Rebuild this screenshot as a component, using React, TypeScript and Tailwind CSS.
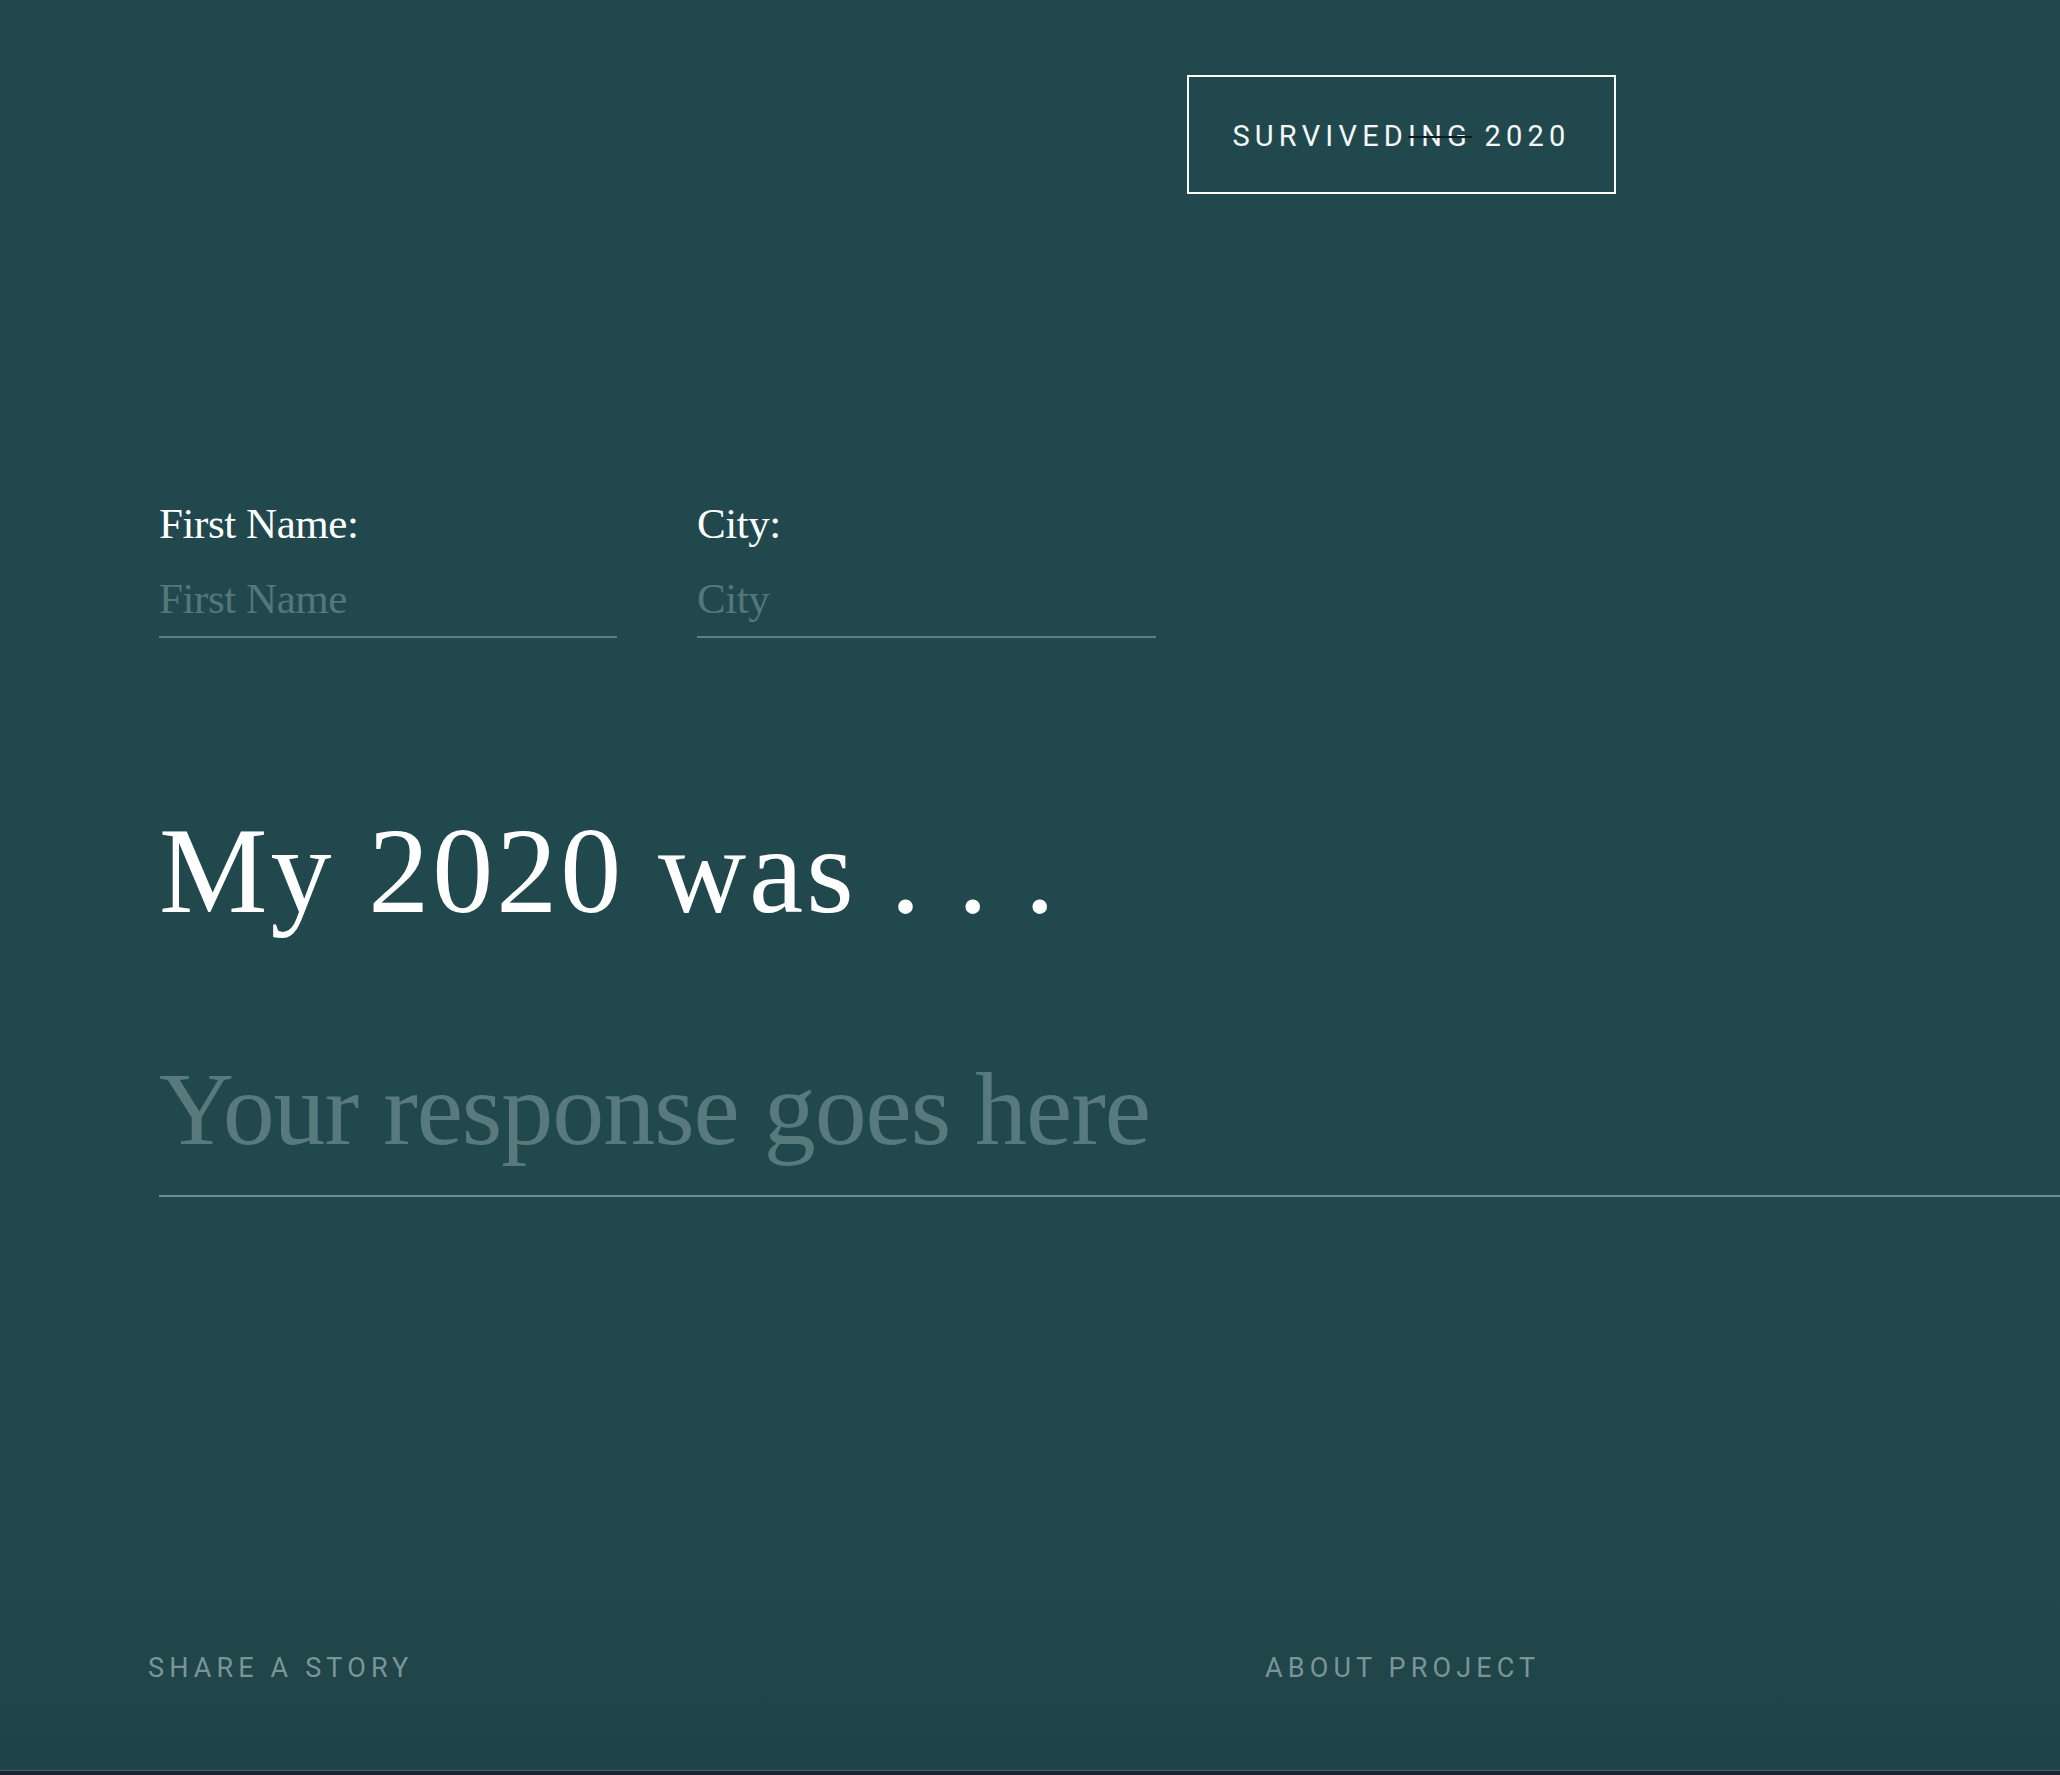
export default function App() {
  const serif = { fontFamily: '"Liberation Serif", "Times New Roman", serif' };
  const sans = { fontFamily: 'Roboto, "Liberation Sans", Arial, sans-serif' };

  return (
    <div className="w-full min-h-[1775px] flex flex-col bg-[#21494d] text-white">
      <div className="flex-1 flex flex-col bg-gradient-to-b from-[#21494d] from-85% to-[#1f4448]">
        {/* header badge */}
        <header className="pt-[75px] pl-[1187px]">
          <div
            className="w-[429px] h-[119px] pt-[4px] border-2 border-white flex items-center justify-center text-[29px] leading-none tracking-[0.18em] text-[#f4f7f7]"
            style={sans}
          >
            <span>
              SURVIVED
              <span className="line-through decoration-[#0c1d20] decoration-2">ING</span> 2020
            </span>
          </div>
        </header>

        {/* name + city */}
        <section className="pl-[159px] mt-[308px] flex gap-[80px]" style={serif}>
          {[
            { label: "First Name:", placeholder: "First Name", w: "w-[458px]" },
            { label: "City:", placeholder: "City", w: "w-[459px]" },
          ].map((f) => (
            <label key={f.label} className={`${f.w} flex flex-col`}>
              <span className="text-[43px] leading-none tracking-[-0.01em] text-white">{f.label}</span>
              <input
                type="text"
                placeholder={f.placeholder}
                className="mt-[29px] pb-[13px] bg-transparent outline-none border-b-2 border-[#5d8083] text-[43px] leading-none tracking-[-0.01em] text-white placeholder:text-[#56777a]"
                style={serif}
              />
            </label>
          ))}
        </section>

        {/* question */}
        <section className="pl-[159px] mt-[172px]" style={serif}>
          <h1 className="text-[122px] leading-none font-normal tracking-[0.025em] text-white">
            My 2020 was . . .
          </h1>
          <input
            type="text"
            placeholder="Your response goes here"
            className="mt-[117px] w-full pb-[27px] bg-transparent outline-none border-b-2 border-[#6a8d90] text-[104px] leading-none tracking-[-0.01em] text-white placeholder:text-[#587a7d]"
            style={serif}
          />
        </section>

        {/* footer nav */}
        <footer
          className="mt-auto mb-[88px] pl-[148px] flex text-[27px] leading-none tracking-[0.19em] text-[#7a9598]"
          style={sans}
        >
          <a className="w-[1117px]">SHARE A STORY</a>
          <a>ABOUT PROJECT</a>
        </footer>
      </div>
      <div className="h-px bg-[#3f6468]" />
      <div className="h-[4px] bg-[#1a2230]" />
    </div>
  );
}
